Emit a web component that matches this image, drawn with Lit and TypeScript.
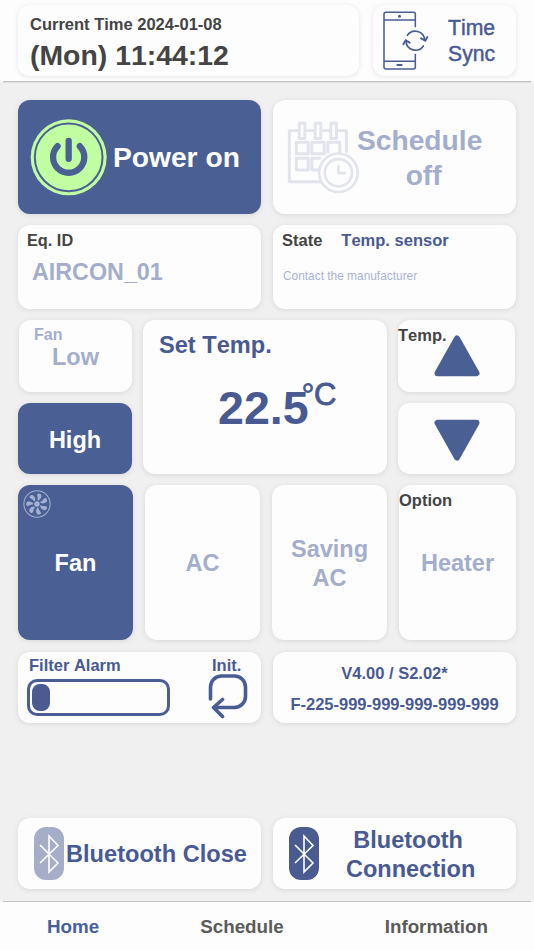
import { LitElement, html, css } from "lit";
import { customElement, property } from "lit/decorators.js";

const phoneSync = html`<svg class="phone" viewBox="354 30 141 183" fill="none" stroke="#495d93" stroke-width="4.6" stroke-linecap="round">
  <path d="M454 82V43a6 6 0 0 0-6-6H366a6 6 0 0 0-6 6V201a6 6 0 0 0 6 6H448a6 6 0 0 0 6-6V161M360 60H454M360 184H454" stroke-linecap="butt"/>
  <path d="M400 195H413" stroke-width="5.5"/>
  <circle cx="406.500" cy="49" r="4.500" fill="#495d93" stroke="none"/>
  <path d="M430 106A28.500 28.500 0 0 1 482 120M478 138A28.500 28.500 0 0 1 426 124" stroke-width="5"/>
  <path d="M471 115L484 122L490 111M418 133L425 121L437 128" stroke-width="5.500"/>
</svg>`;

const power = html`<svg class="power" viewBox="89 85 232 232" fill="none">
  <circle cx="205.500" cy="200.500" r="114.500" fill="#c1fda1"/>
  <circle cx="205.500" cy="200.500" r="102" stroke="#4a5f93" stroke-width="6"/>
  <path d="M172 167A47 47 0 1 0 239 167M205.500 151V205" stroke="#4a5f93" stroke-width="19" stroke-linecap="round"/>
</svg>`;

const calendar = html`<svg class="calendar" viewBox="68 90 220 220" fill="none" stroke="#e1e4ec" stroke-width="9" stroke-linejoin="round">
  <path d="M104 119H75V273H172M122 119H152M170 119H199M217 119H247V186"/>
  <rect x="105" y="97" width="17" height="46"/><rect x="153" y="97" width="17" height="46"/><rect x="200" y="97" width="17" height="46"/>
  <rect x="96" y="154" width="36" height="35"/><rect x="143" y="154" width="37" height="35"/><path d="M191 188V154H227V186"/>
  <rect x="96" y="202" width="36" height="36"/><path d="M170 202H143V238H163"/>
  <circle cx="223" cy="246" r="58" fill="#fdfdfe" stroke-width="8"/><circle cx="223" cy="246" r="41" stroke-width="8"/>
  <path d="M223 223V247H245" stroke-width="8"/>
</svg>`;

const fan = html`<svg class="fan" viewBox="70 38 82 82" fill="#a3b0cf">
  <circle cx="111" cy="79" r="38.500" fill="none" stroke="#a3b0cf" stroke-width="3"/>
  <circle cx="111" cy="79" r="8"/>
  ${[0, 51.4, 102.8, 154.3, 205.7, 257.1, 308.6].map(
    (a) => html`<svg x="0" y="0" width="200" height="200" overflow="visible"><path transform="rotate(${a} 111 79)" d="M114 69C120 67 124 61 124 55C124 48 115 46 112 50C110 54 115 61 112 67Z"/></svg>`,
  )}
</svg>`;

const reset = html`<svg class="reset" viewBox="0 0 40 46" fill="none" stroke="#495d93" stroke-width="3.600" stroke-linecap="round" stroke-linejoin="round">
  <path d="M2.500 26V14A11 11 0 0 1 13.500 3H26.500A11 11 0 0 1 37.500 14V23A11 11 0 0 1 26.500 34.500H6M14.500 26.500L5.500 34.500L14.500 43.500"/>
</svg>`;

const triangle = html`<svg class="tri" viewBox="0 0 46 42"><path d="M23 3.500L42.500 38.200H3.500Z" fill="#4a5f93" stroke="#4a5f93" stroke-width="6" stroke-linejoin="round"/></svg>`;

@customElement("bt-badge")
class BtBadge extends LitElement {
  @property({ type: Boolean, reflect: true }) on = false;
  static styles = css`
    :host { display: block; flex: none; width: 30px; height: 53px; border-radius: 12px; background: #a5adc8; }
    :host([on]) { background: #4a5b90; }
    .rune { display: block; width: 30px; height: 53px; }
  `;
  render() {
    return html`<svg class="rune" viewBox="0 0 30 53" fill="none" stroke="#fff" stroke-width="1.600">
      <path d="M6 18L24 36L15 45V9L24 18.500L6 36"/>
    </svg>`;
  }
}

@customElement("app-root")
class AppRoot extends LitElement {
  static styles = css`
    :host {
      display: flex; flex-direction: column; width: 534px; height: 950px; overflow: hidden;
      background: #f0f0f0; color: #495a92;
      font-family: "Liberation Sans", Arial, sans-serif; font-weight: 700; font-size: 23.5px; font-kerning: none;
    }
    * { box-sizing: border-box; }
    .card {
      position: relative; background: #fdfdfe; border-radius: 12px; white-space: nowrap;
      box-shadow: 0 1px 5px rgba(60, 65, 85, 0.13);
    }
    .center { display: flex; align-items: center; justify-content: center; text-align: center; }
    .solid { background: #4a5f93; color: #fff; }
    .muted { color: #a4aeca; }
    .dark { color: #444; }
    .small { font-size: 16.5px; line-height: 20px; }
    .header { height: 81px; flex: none; padding: 5px 18px 5px; display: grid; grid-template-columns: 341px 143px; column-gap: 14px; background: #fdfdfd; }
    .rule { height: 1px; flex: none; margin: 0 3px; background: #c4c4c4; box-shadow: 0 1px #dedede; }
    .clock { padding: 9px 0 0 12px; color: #444; }
    .time { font-size: 28.400px; line-height: 34px; padding-top: 4px; }
    .sync { display: flex; align-items: center; padding-left: 9px; }
    .phone { width: 47px; height: 61px; }
    .sync-text { margin-left: 19px; font-weight: 400; font-size: 21.2px; line-height: 26px; -webkit-text-stroke: 0.45px #495a92; }
    .main { padding: 18px 18px 0; display: flex; flex-direction: column; flex: 1; }
    .two { display: grid; grid-template-columns: 243px 243px; column-gap: 12px; }
    .big { height: 114px; font-size: 28.2px; }
    .big .card { display: flex; align-items: center; }
    .power { width: 77px; height: 77px; margin: 0 6px 0 12px; }
    .power-text { padding-top: 1px; }
    .calendar { width: 73px; height: 73px; margin-left: 14px; }
    .sched { text-align: center; line-height: 34.5px; margin-left: -3px; padding-top: 1px; }
    .nudge { padding-left: 8px; }
    .info { height: 84px; margin-top: 11px; }
    .info .card { padding: 5px 9px; }
    .eq { font-size: 16.3px; }
    .eq-id { font-size: 23.3px; line-height: 28px; padding: 8px 0 0 5px; }
    .state { display: flex; gap: 18px; }
    .alert { padding-left: 1px; }
    .note { font-size: 11.9px; font-weight: 400; line-height: 16px; padding: 18px 0 0 1px; color: #a9b4d2; }
    .controls { display: grid; grid-template-columns: 114px 244px 117px; grid-template-rows: 72px 71px; column-gap: 11px; row-gap: 11px; margin-top: 11px; height: 155px; }
    .low { margin-left: 1px; }
    .low-text { padding-top: 2px; }
    .tag { position: absolute; top: 5px; left: 0; }
    .tag-fan { left: 15px; font-size: 16px; }
    .high { padding-top: 3px; }
    .set { grid-row: 1 / 3; grid-column: 2; padding: 11px 0 0 16px; }
    .set-title { font-size: 23.6px; line-height: 28px; }
    .value { display: flex; padding: 22px 0 0 59px; font-size: 46.6px; line-height: 54px; }
    .unit { font-size: 31px; line-height: 34px; margin: -3px 0 0 -7px; font-weight: 400; -webkit-text-stroke: 0.9px #495a92; }
    .degree { font-weight: 700; -webkit-text-stroke: 0; }
    .tri { display: block; width: 46px; height: 42px; }
    .down { transform: rotate(180deg); margin-top: 3px; }
    .modes { display: grid; grid-template-columns: 115px 115px 115px 117px; column-gap: 12px; height: 155px; margin-top: 10px; line-height: 29px; }
    .modes .card { padding-top: 2px; }
    .fan { position: absolute; left: 5px; top: 5px; width: 28px; height: 28px; }
    .foot { height: 71px; margin-top: 12px; }
    .filter { display: flex; padding: 3px 13px 0 9px; justify-content: space-between; }
    .track { width: 143px; height: 37px; margin-top: 4px; border: 3px solid #4b5e93; border-radius: 10px; padding: 2px; display: flex; }
    .label { padding-left: 2px; }
    .fill { width: 18px; border-radius: 8px; background: #4a5b90; }
    .init { width: 40px; }
    .init-label { padding-left: 4px; }
    .reset { display: block; width: 40px; height: 46px; margin-top: -2px; }
    .version { text-align: center; padding-top: 11px; }
    .serial { padding-top: 11px; }
    .bt { height: 71px; margin-top: 95px; }
    .bt .card { display: flex; align-items: center; padding-left: 16px; line-height: 28.500px; }
    .bt-close { margin: 2px 0 0 2px; font-size: 23.6px; }
    .bt-conn { margin: 2px 0 0 27px; text-align: center; }
    .conn-top { margin-left: -5px; }
    .nav { height: 48px; flex: none; background: #fdfdfd; color: #5b5b5b; font-size: 18.8px; line-height: 48px; display: flex; justify-content: space-between; padding: 1px 46px 0 47px; }
    .active { color: #47609a; }
  `;
  render() {
    return html`
      <header class="header">
        <div class="card clock">
          <div class="small">Current Time 2024-01-08</div>
          <div class="time">(Mon) 11:44:12</div>
        </div>
        <div class="card sync">${phoneSync}<div class="sync-text">Time<br />Sync</div></div>
      </header>
      <div class="rule"></div>
      <main class="main">
        <div class="two big">
          <div class="card solid">${power}<span class="power-text">Power on</span></div>
          <div class="card muted">${calendar}<div class="sched">Schedule<br /><span class="nudge">off</span></div></div>
        </div>
        <div class="two info">
          <div class="card"><div class="small dark eq">Eq. ID</div><div class="eq-id muted">AIRCON_01</div></div>
          <div class="card">
            <div class="small state"><span class="dark">State</span><span class="alert">Temp. sensor</span></div>
            <div class="note">Contact the manufacturer</div>
          </div>
        </div>
        <div class="controls">
          <div class="card center muted low"><span class="small tag tag-fan">Fan</span><span class="low-text">Low</span></div>
          <div class="card set">
            <div class="set-title">Set Temp.</div>
            <div class="value"><span>22.5</span><span class="unit"><span class="degree">°</span>C</span></div>
          </div>
          <div class="card center"><span class="small dark tag">Temp.</span>${triangle}</div>
          <div class="card center solid high">High</div>
          <div class="card center"><div class="down">${triangle}</div></div>
        </div>
        <div class="modes">
          <div class="card center solid">${fan}Fan</div>
          <div class="card center muted">AC</div>
          <div class="card center muted">Saving<br />AC</div>
          <div class="card center muted"><span class="small dark tag">Option</span>Heater</div>
        </div>
        <div class="two foot">
          <div class="card filter small">
            <div><div class="label">Filter Alarm</div><div class="track"><div class="fill"></div></div></div>
            <div class="init"><div class="init-label">Init.</div>${reset}</div>
          </div>
          <div class="card version small"><div>V4.00 / S2.02*</div><div class="serial">F-225-999-999-999-999-999</div></div>
        </div>
        <div class="two bt">
          <div class="card"><bt-badge></bt-badge><span class="bt-close">Bluetooth Close</span></div>
          <div class="card"><bt-badge on></bt-badge><div class="bt-conn"><div class="conn-top">Bluetooth</div>Connection</div></div>
        </div>
      </main>
      <div class="rule"></div>
      <nav class="nav"><span class="active">Home</span><span>Schedule</span><span>Information</span></nav>
    `;
  }
}
